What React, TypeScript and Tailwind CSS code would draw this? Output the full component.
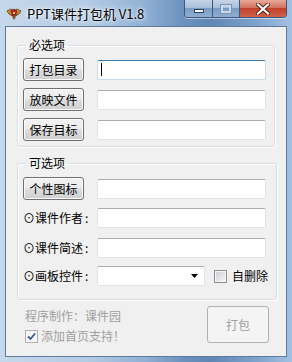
import React from "react";

const font = "font-['Noto_Sans_CJK_SC','Noto_Sans',sans-serif]";

const WinButton: React.FC<{ children: React.ReactNode }> = ({ children }) => (
  <button className="w-[61px] h-[23px] shrink-0 rounded-[3px] border border-[#707070] bg-[linear-gradient(#f2f2f2_0%,#ebebeb_48%,#dddddd_52%,#cfcfcf_100%)] shadow-[inset_0_0_0_1px_#fbfbfb] text-[12px] leading-none text-black">
    {children}
  </button>
);

const TextBox: React.FC<{ focused?: boolean }> = ({ focused }) => (
  <div
    className={
      focused
        ? "w-[169px] h-[20px] shrink-0 bg-white border border-[#c5daed] border-t-[#3d7bad] rounded-[2px] flex items-center pl-[3px]"
        : "w-[169px] h-[20px] shrink-0 bg-white border border-[#e2e3ea] border-t-[#abadb3] rounded-[2px]"
    }
  >
    {focused && <div className="w-px h-[13px] bg-black" />}
  </div>
);

const Label: React.FC<{ text: string }> = ({ text }) => (
  <div className="w-[61px] shrink-0 flex items-center text-[12px] leading-none text-black whitespace-nowrap">
    <span>⊙{text}</span>
    <span className="ml-[2px]">:</span>
  </div>
);

const TitleIcon = () => (
  <svg width="16" height="16" viewBox="0 0 16 16">
    <path d="M1 6 L5 4 L8 6 L11 4 L15 6 L13 9 L8 12 L3 9 Z" fill="#c8912f" stroke="#6b3a12" strokeWidth="0.8" />
    <path d="M5 6 L8 4 L11 6 L10 10 L8 11 L6 10 Z" fill="#b3261e" stroke="#5a140f" strokeWidth="0.6" />
    <path d="M7 7 L9 7 L8.6 9 L7.4 9 Z" fill="#f3d57a" />
    <path d="M6 12 L8 15 L10 12" fill="#8a5a1e" />
  </svg>
);

export default function App() {
  return (
    <div className={`${font} w-[292px] h-[362px] flex flex-col bg-[linear-gradient(90deg,#c6d8eb_0%,#b4cbe4_30%,#8fb0d4_50%,#6d93bf_62%,#5f86b4_72%,#7ea3cc_88%,#a3c2e3_100%)] overflow-hidden`}>
      {/* title bar */}
      <div className="h-[26px] flex items-start shrink-0">
        <div className="h-[26px] flex items-center pl-[6px] gap-[5px]">
          <TitleIcon />
          <span className="text-[13px] leading-none text-black [text-shadow:0_0_6px_#ffffff,0_0_3px_#ffffff]">
            PPT课件打包机 V1.8
          </span>
        </div>
        <div className="ml-auto mr-[5px] flex h-[18px] border border-t-0 border-[#3b5680] rounded-b-[4px] overflow-hidden shadow-[0_1px_0_rgba(255,255,255,0.5)]">
          <div className="w-[28px] h-full flex items-center justify-center bg-[linear-gradient(#c6d5e7_0%,#a8bfda_45%,#7e9cc2_50%,#8eaed3_100%)] border-r border-[#3b5680]">
            <div className="w-[10px] h-[4px] bg-white border border-[#2d4467] mt-[4px]" />
          </div>
          <div className="w-[27px] h-full flex items-center justify-center bg-[linear-gradient(#c6d5e7_0%,#a8bfda_45%,#7e9cc2_50%,#8eaed3_100%)] border-r border-[#3b5680]">
            <div className="w-[10px] h-[8px] border-2 border-[#c9d7e8] outline outline-1 outline-[#7d95b6]" />
          </div>
          <div className="w-[46px] h-full flex items-center justify-center bg-[linear-gradient(#e8a99a_0%,#d4735f_45%,#c2412a_50%,#d0624a_100%)]">
            <svg width="14" height="12" viewBox="0 0 14 12">
              <path d="M2 1.5 L12 10.5 M12 1.5 L2 10.5" stroke="#5a1a10" strokeWidth="4" strokeLinecap="square" />
              <path d="M2 1.5 L12 10.5 M12 1.5 L2 10.5" stroke="#ffffff" strokeWidth="2.2" strokeLinecap="square" />
            </svg>
          </div>
        </div>
      </div>

      {/* client area */}
      <div className="flex-1 mx-[5px] mb-[5px] border border-[#5f7a9c] bg-[#f0f0f0] px-[11px] pt-[11px] flex flex-col">
        <fieldset className="border border-[#d5dfe5] rounded-[3px] pl-[5px] pr-[8px] pt-[6px] pb-[5px] shadow-[inset_1px_1px_0_#ffffff,1px_1px_0_#ffffff]">
          <legend className="ml-[3px] px-[3px] text-[12px] leading-[14px] text-black">必选项</legend>
          <div className="flex flex-col gap-[7px]">
            <div className="flex items-center gap-[13px]">
              <WinButton>打包目录</WinButton>
              <TextBox focused />
            </div>
            <div className="flex items-center gap-[13px]">
              <WinButton>放映文件</WinButton>
              <TextBox />
            </div>
            <div className="flex items-center gap-[13px]">
              <WinButton>保存目标</WinButton>
              <TextBox />
            </div>
          </div>
        </fieldset>

        <fieldset className="mt-[9px] border border-[#d5dfe5] rounded-[3px] pl-[5px] pr-[8px] pt-[7px] pb-[13px] shadow-[inset_1px_1px_0_#ffffff,1px_1px_0_#ffffff]">
          <legend className="ml-[3px] px-[3px] text-[12px] leading-[14px] text-black">可选项</legend>
          <div className="flex items-center gap-[13px]">
            <WinButton>个性图标</WinButton>
            <TextBox />
          </div>
          <div className="mt-[8px] flex items-center gap-[13px]">
            <Label text="课件作者" />
            <TextBox />
          </div>
          <div className="mt-[10px] flex items-center gap-[13px]">
            <Label text="课件简述" />
            <TextBox />
          </div>
          <div className="mt-[8px] flex items-center whitespace-nowrap">
            <Label text="画板控件" />
            <div className="ml-[13px] w-[108px] h-[20px] shrink-0 bg-white border border-[#e2e3ea] border-t-[#abadb3] rounded-[2px] flex items-center justify-end pr-[6px]">
              <svg width="7" height="4" viewBox="0 0 7 4">
                <path d="M0 0 L7 0 L3.5 4 Z" fill="#000000" />
              </svg>
            </div>
            <div className="ml-[9px] w-[13px] h-[13px] shrink-0 border border-[#8e8f8f] bg-[linear-gradient(135deg,#cbcfd5_0%,#f6f6f6_100%)] shadow-[inset_0_0_0_1px_#f4f4f4]" />
            <span className="ml-[5px] shrink-0 text-[12px] leading-none text-black">自删除</span>
          </div>
        </fieldset>

        <div className="mt-[6px] flex items-start justify-between pl-[8px] pr-[6px]">
          <div className="flex flex-col">
            <div className="h-[20px] flex items-center text-[12px] leading-none text-[#a0a0a0]">程序制作：课件园</div>
            <div className="h-[20px] flex items-center gap-[3px] text-[12px] leading-none text-[#a0a0a0]">
              <div className="w-[13px] h-[13px] border border-[#b0b0b0] bg-[#f4f4f4] flex items-center justify-center">
                <svg width="9" height="9" viewBox="0 0 9 9">
                  <path d="M1 4.5 L3.5 7 L8 1.5" fill="none" stroke="#3a56a0" strokeWidth="1.8" />
                </svg>
              </div>
              <span>添加首页支持！</span>
            </div>
          </div>
          <button className="w-[62px] h-[37px] rounded-[3px] border border-[#adb2b5] bg-[#f4f4f4] text-[12px] leading-none text-[#a0a0a0]">
            打包
          </button>
        </div>
      </div>
    </div>
  );
}
